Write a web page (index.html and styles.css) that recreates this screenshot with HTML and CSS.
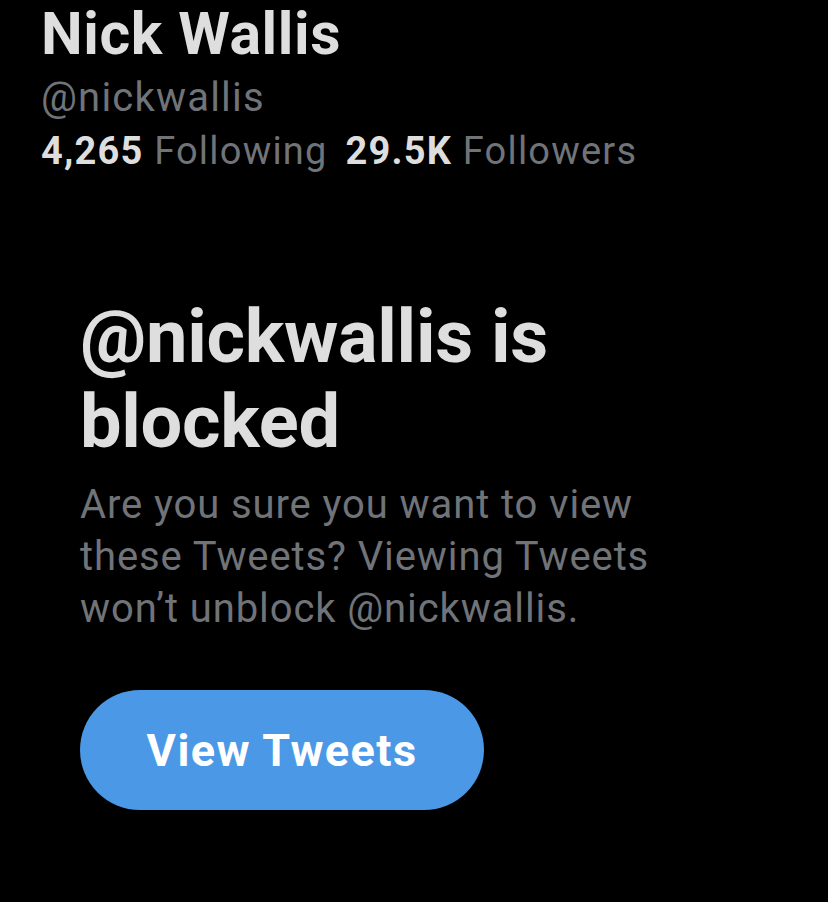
FILE: index.html
```html
<!DOCTYPE html>
<html lang="en">

<head>
    <meta charset="UTF-8">
    <meta name="viewport" content="width=device-width, initial-scale=1.0">
    <title>Nick Wallis</title>
    <link rel="stylesheet" href="styles.css">
</head>

<body>
    <div class="profile">
        <h1 class="name">Nick Wallis</h1>
        <div class="handle">@nickwallis</div>
        <div class="stats">
            <span class="stat"><b>4,265</b> Following</span>
            <span class="stat"><b>29.5K</b> Followers</span>
        </div>
    </div>

    <div class="blocked">
        <h2 class="title">@nickwallis is blocked</h2>
        <p class="note">Are you sure you want to view these Tweets? Viewing Tweets won’t unblock @nickwallis.</p>
        <button class="view-btn">View Tweets</button>
    </div>
</body>

</html>
```

FILE: styles.css
```css
* {
    padding: 0;
    margin: 0;
}

html,
body {
    height: 100%;
    background-color: #000;
    color: #dedede;
    font-family: Roboto, "Liberation Sans", sans-serif;
    overflow: hidden;
}

.profile {
    padding-left: 41px;
}

.name {
    font-size: 59px;
    font-weight: 700;
    line-height: 68px;
    letter-spacing: 0.6px;
}

.handle {
    font-size: 40px;
    line-height: 52px;
    margin-top: 4px;
    letter-spacing: 1.2px;
    color: #707378;
}

.stats {
    display: flex;
    gap: 18px;
    font-size: 38px;
    line-height: 50px;
    margin-top: 2px;
    letter-spacing: 1.2px;
    color: #707378;
}

.stats b {
    color: #dedede;
    font-weight: 700;
}

.blocked {
    padding: 0 40px 0 80px;
    margin-top: 118px;
}

.title {
    font-size: 74px;
    font-weight: 700;
    line-height: 85px;
    width: 520px;
    letter-spacing: -0.3px;
}

.note {
    font-size: 40px;
    line-height: 52px;
    color: #707378;
    width: 640px;
    margin-top: 15px;
    letter-spacing: 0.9px;
}

.view-btn {
    display: block;
    margin-top: 55px;
    width: 404px;
    height: 120px;
    border: none;
    border-radius: 60px;
    background-color: #4a98e6;
    color: #fff;
    font-family: Roboto, "Liberation Sans", sans-serif;
    font-size: 45px;
    font-weight: 700;
    letter-spacing: 1.4px;
}
```
